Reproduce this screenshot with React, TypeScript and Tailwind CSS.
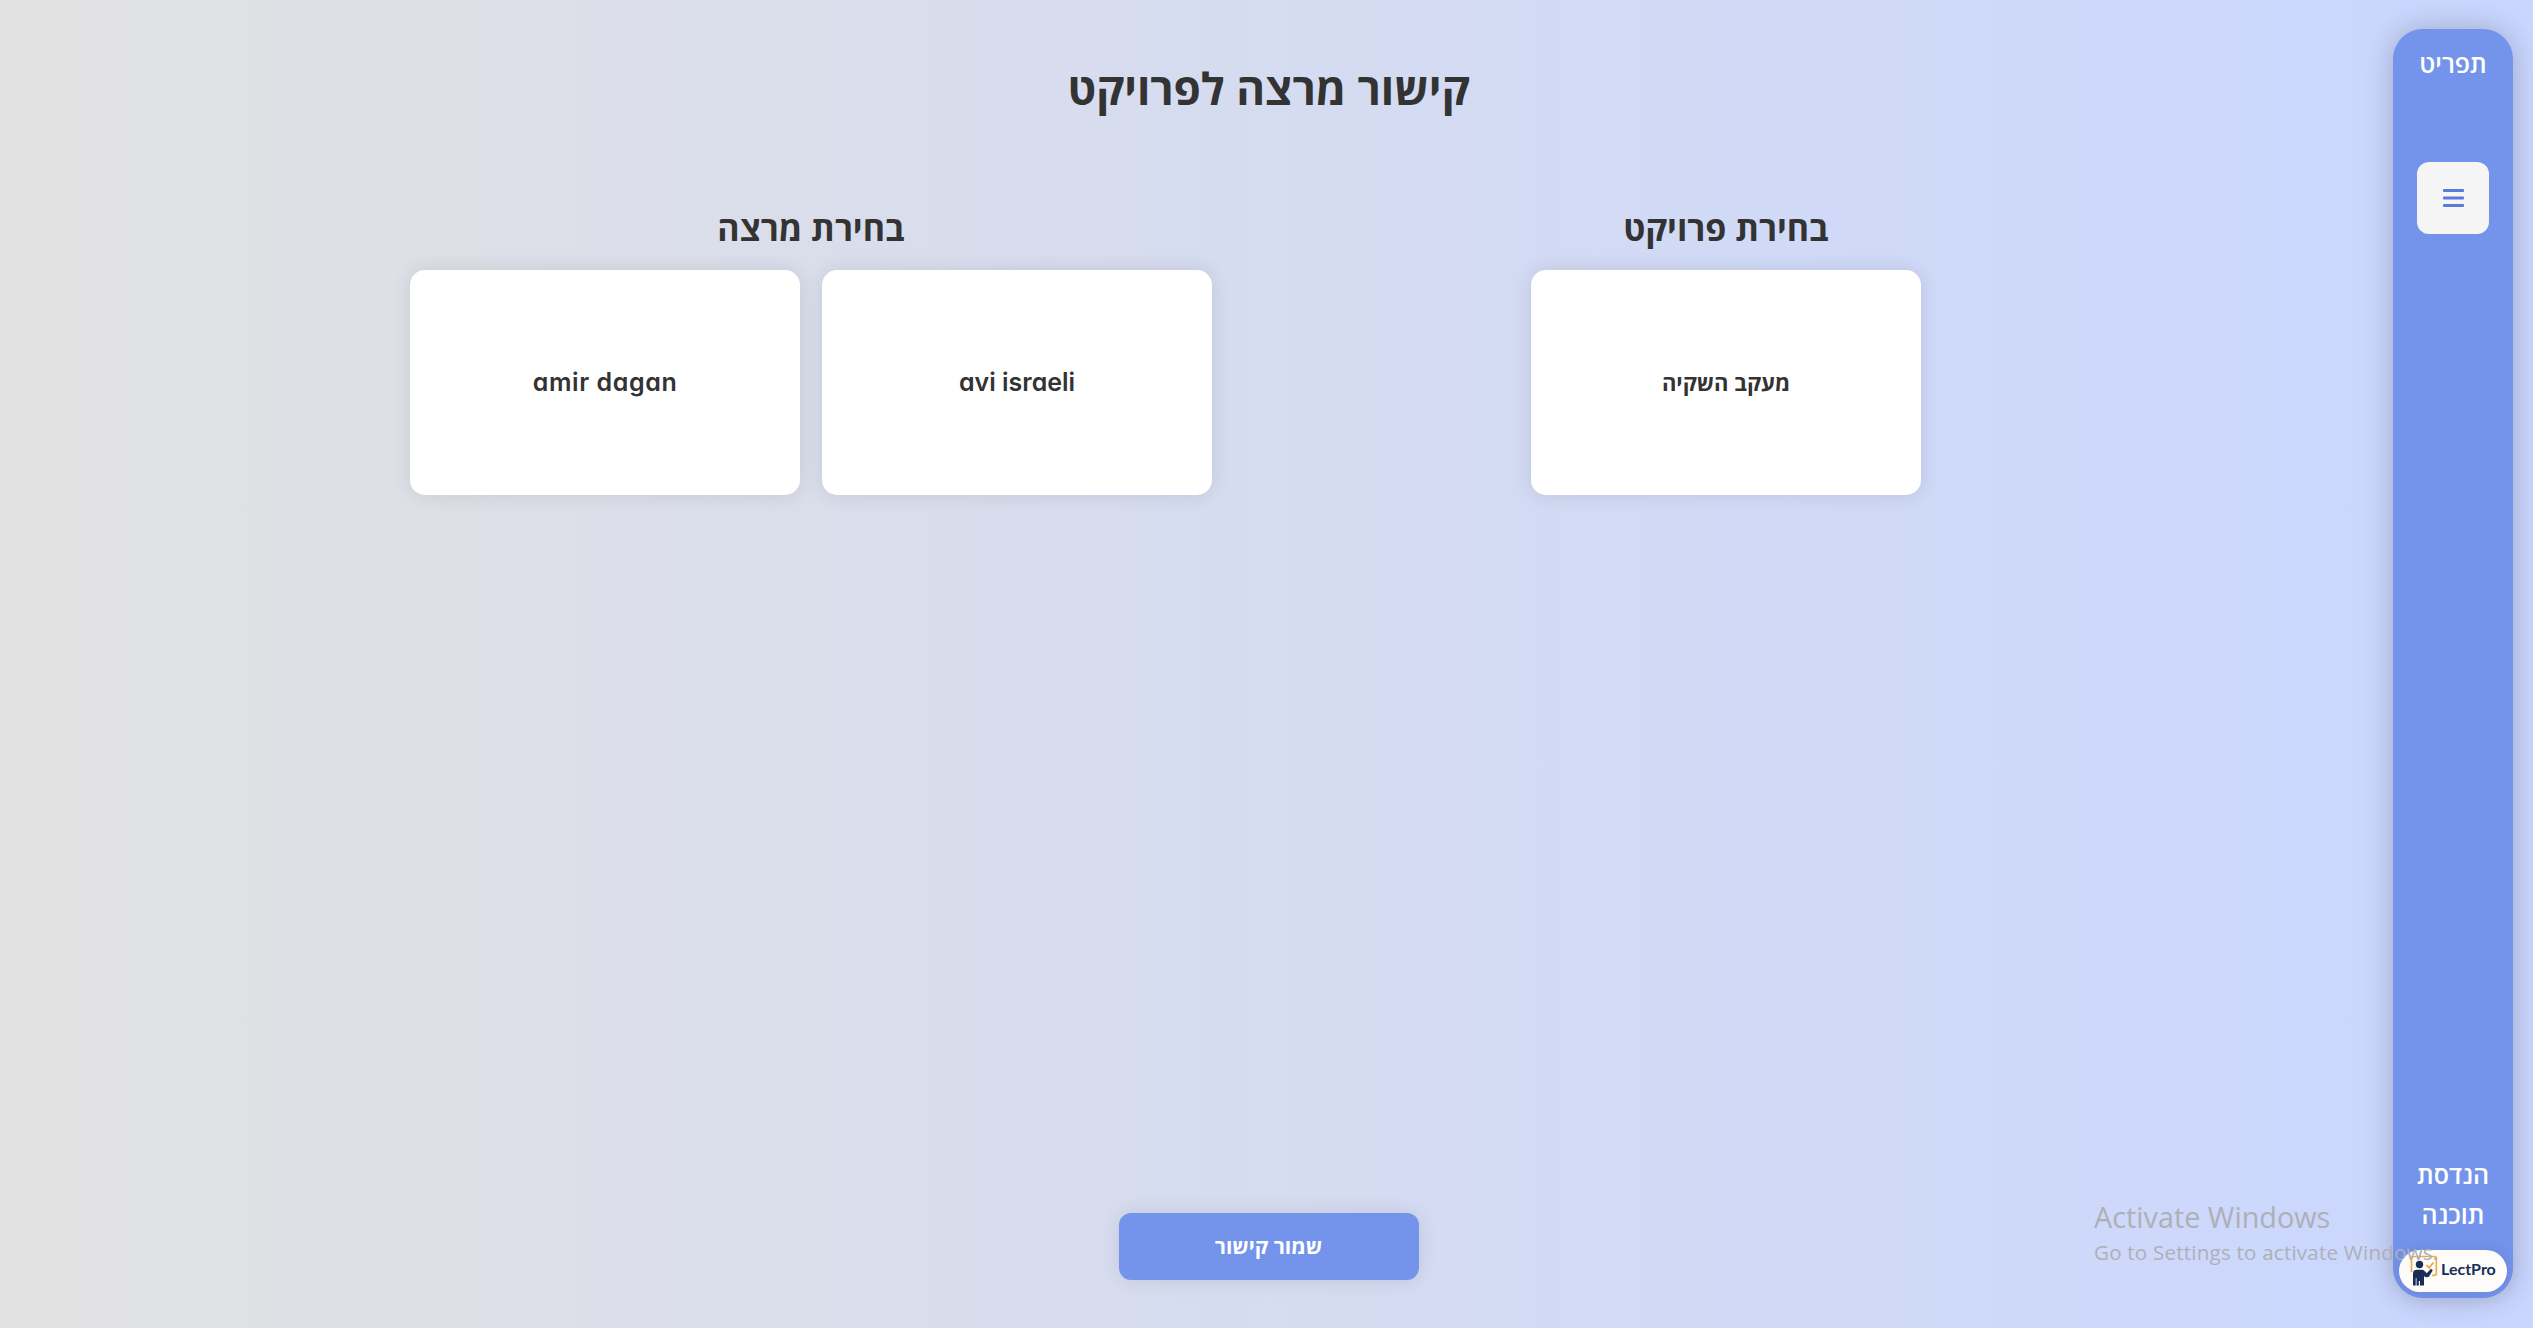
import React from "react";

function Card({ label, latin, wide }: { label: string; latin?: boolean; wide?: boolean }) {
  return (
    <div className="flex h-[225px] w-[390px] items-center justify-center rounded-[15px] bg-white shadow-[0_0_20px_rgba(0,0,0,0.1)]">
      {latin ? (
        <span className={`font-['Inter',sans-serif] text-[25px] leading-none font-semibold whitespace-nowrap [font-feature-settings:'cv11'] ${wide ? "tracking-[0.6px]" : "tracking-[0px]"}`}>{label}</span>
      ) : (
        <span className="-mt-px text-[22px] leading-none font-bold whitespace-nowrap">{label}</span>
      )}
    </div>
  );
}

function Logo() {
  return (
    <div className="flex h-[42px] w-[108px] items-center gap-[2px] rounded-full bg-[#fdfcfa] pl-[10px] shadow-[0_0_20px_rgba(0,0,0,0.1)]" dir="ltr">
      <svg width="30" height="32" viewBox="0 0 30 32" className="-mt-px shrink-0">
        <path d="M2.5 17V3.200q0-1.700 1.700-1.700H25.500q1.800 0 1.800 1.800V18.500q0 1.800-1.800 1.800h-2.500" fill="none" stroke="#edac4c" strokeWidth="1.700" />
        <path d="M17.500 10l2.700 2.800L24.500 7.500" fill="none" stroke="#edac4c" strokeWidth="1.900" />
        <circle cx="10.500" cy="9.500" r="3.700" fill="#192d57" />
        <path d="M4 30.500V18.500q0-3.800 3.800-3.800h5.200q1.500 0 2.500 1.200l2.300 2.300 4.200-4.500 1.800 1.500-3.400 5.700q-1.500 1.800-3.800 1L15 21.200V30.500H11v-4.500h-1.200V30.500H7.500v-7.500H6.700v7.500z" fill="#192d57" />
      </svg>
      <span className="-mt-[4px] font-['Lato',sans-serif] text-[16px] leading-none font-bold text-[#192d57]">LectPro</span>
    </div>
  );
}

function Sidebar() {
  return (
    <aside className="mt-[29px] mr-5 flex h-[1269px] w-[120px] shrink-0 flex-col items-center rounded-[30px] bg-[#7494ec] shadow-[0_0_30px_rgba(0,0,0,0.22)]">
      <div className="mt-[16px] text-[25px] leading-[36px] font-semibold text-white">תפריט</div>
      <button className="mt-[81px] flex h-[72px] w-[72px] items-center justify-center rounded-xl bg-[#f5f5f5]">
        <svg width="21" height="19" viewBox="0 0 21 19" fill="#5b7bdc">
          <rect width="21" height="3" rx="1" />
          <rect y="7.500" width="21" height="3" rx="1" />
          <rect y="15" width="21" height="3" rx="1" />
        </svg>
      </button>
      <div className="mt-auto mb-[16px] w-[90px] text-center text-[25px] leading-[40px] font-semibold text-white">הנדסת תוכנה</div>
      <div className="mb-[6px]"><Logo /></div>
    </aside>
  );
}

export default function App() {
  return (
    <div dir="rtl" className="relative flex h-[1328px] w-[2533px] overflow-hidden font-['Open_Sans','Noto_Sans',sans-serif] text-[#333333] [background-image:linear-gradient(to_right,#e2e2e2,#c9d6ff)]">
      <div className="flex" dir="ltr">
        <main className="flex h-[1328px] w-[2393px] shrink-0 flex-col pl-[144px]" dir="rtl">
          <h1 className="mt-[58px] text-center text-[44px] leading-[60px] font-bold">קישור מרצה לפרויקט</h1>
          <div className="mt-[90px] mr-[472px] flex gap-[319px]">
            <section className="flex flex-col items-center">
              <h2 className="mb-[22px] text-[34px] leading-[40px] font-bold">בחירת פרויקט</h2>
              <Card label="מעקב השקיה" />
            </section>
            <section className="flex flex-col items-center">
              <h2 className="mb-[22px] text-[34px] leading-[40px] font-bold">בחירת מרצה</h2>
              <div className="flex gap-[22px]">
                <Card label="avi israeli" latin />
                <Card label="amir dagan" latin wide />
              </div>
            </section>
          </div>
          <button className="mx-auto mt-auto mb-12 h-[67px] w-[300px] rounded-xl bg-[#7494ec] text-[21px] font-bold text-white shadow-[0_0_20px_rgba(0,0,0,0.1)]">שמור קישור</button>
        </main>
        <Sidebar />
      </div>
      <div dir="ltr" className="absolute top-[1199px] left-[2094px] whitespace-nowrap text-[#adb0b6]">
        <div className="text-[28.8px] leading-[36px] font-normal">Activate Windows</div>
        <div className="mt-px text-[20.6px] leading-[33px] font-normal tracking-[0.2px]">Go to Settings to activate Windows.</div>
      </div>
    </div>
  );
}
